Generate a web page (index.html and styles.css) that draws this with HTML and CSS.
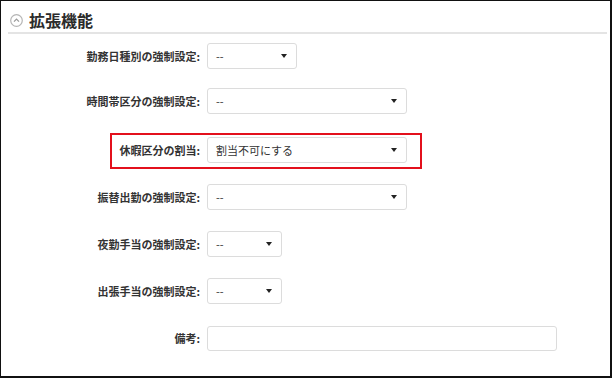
FILE: index.html
```html
<!DOCTYPE html>
<html lang="ja">
<head>
  <meta charset="UTF-8">
  <title>拡張機能</title>
  <link rel="stylesheet" href="styles.css">
</head>
<body>
  <div class="frame">
    <div class="section-head">
      <span class="toggle">
        <svg width="13" height="13" viewBox="0 0 13 13">
          <circle cx="6.5" cy="6.5" r="5.8" fill="none" stroke="#b5b5b5" stroke-width="1.2"/>
          <path d="M4 7.6 L6.5 5.1 L9 7.6" fill="none" stroke="#9a9a9a" stroke-width="1.3"/>
        </svg>
      </span>
      <h2>拡張機能</h2>
    </div>

    <div class="form">
      <div class="row first">
        <label class="label">勤務日種別の強制設定:</label>
        <div class="select w-s">
          <span>--</span>
          <span class="caret"></span>
        </div>
      </div>
      <div class="row">
        <label class="label">時間帯区分の強制設定:</label>
        <div class="select w-l">
          <span>--</span>
          <span class="caret"></span>
        </div>
      </div>
      <!-- highlighted row -->
      <div class="row marked">
        <label class="label">休暇区分の割当:</label>
        <div class="select w-l">
          <span>割当不可にする</span>
          <span class="caret"></span>
        </div>
      </div>
      <div class="row">
        <label class="label">振替出勤の強制設定:</label>
        <div class="select w-l">
          <span>--</span>
          <span class="caret"></span>
        </div>
      </div>
      <div class="row">
        <label class="label">夜勤手当の強制設定:</label>
        <div class="select w-xs">
          <span>--</span>
          <span class="caret"></span>
        </div>
      </div>
      <div class="row">
        <label class="label">出張手当の強制設定:</label>
        <div class="select w-xs">
          <span>--</span>
          <span class="caret"></span>
        </div>
      </div>
      <div class="row">
        <label class="label">備考:</label>
        <input type="text" class="text-input">
      </div>
    </div>
  </div>
</body>
</html>
```

FILE: styles.css
```css
html, body {
  margin: 0;
  padding: 0;
  background-color: #fff;
}
body {
  font-family: "Noto Sans CJK JP", "Noto Sans", sans-serif;
  color: #333;
}
.frame {
  box-sizing: border-box;
  width: 612px;
  height: 378px;
  border: 1px solid #111;
  border-right-width: 2px;
  border-bottom-width: 2px;
  overflow: hidden;
}
.section-head {
  display: flex;
  align-items: center;
  margin: 0 3px 0 7px;
  padding: 9px 0 2px 2px;
  border-bottom: 2px solid #e4e4e4;
}
.toggle {
  display: flex;
  width: 13px;
  height: 13px;
  margin-right: 6px;
}
h2 {
  margin: 0;
  font-size: 16px;
  line-height: 20px;
  font-weight: 700;
  color: #2b2b2b;
}
.form {
  display: flex;
  flex-direction: column;
  gap: 21px;
  padding-top: 9px;
}
.row {
  position: relative;
  display: flex;
  align-items: center;
  gap: 7px;
  height: 26px;
}
.row.first {
  margin-bottom: -2px;
}
.row.marked {
  margin-top: 2px;
}
/* red annotation box */
.row.marked::after {
  content: "";
  position: absolute;
  left: 109px;
  top: -4px;
  width: 312px;
  height: 36px;
  box-sizing: border-box;
  border: 2px solid #e3101c;
}
.label {
  width: 199px;
  text-align: right;
  font-size: 11px;
  font-weight: 700;
  color: #333;
  white-space: nowrap;
}
.select {
  box-sizing: border-box;
  height: 26px;
  display: flex;
  align-items: center;
  justify-content: space-between;
  padding: 0 9px 0 8px;
  border: 1px solid #dcdcdc;
  border-radius: 3px;
  background-color: #fff;
  font-size: 11px;
  color: #333;
}
.caret {
  width: 0;
  height: 0;
  border-left: 3.5px solid transparent;
  border-right: 3.5px solid transparent;
  border-top: 4px solid #222;
}
.w-xs {
  width: 75px;
}
.w-s {
  width: 90px;
}
.w-l {
  width: 200px;
}
.text-input {
  box-sizing: border-box;
  width: 350px;
  height: 25px;
  margin: 0;
  border: 1px solid #dcdcdc;
  border-radius: 3px;
  background-color: #fff;
}
```
